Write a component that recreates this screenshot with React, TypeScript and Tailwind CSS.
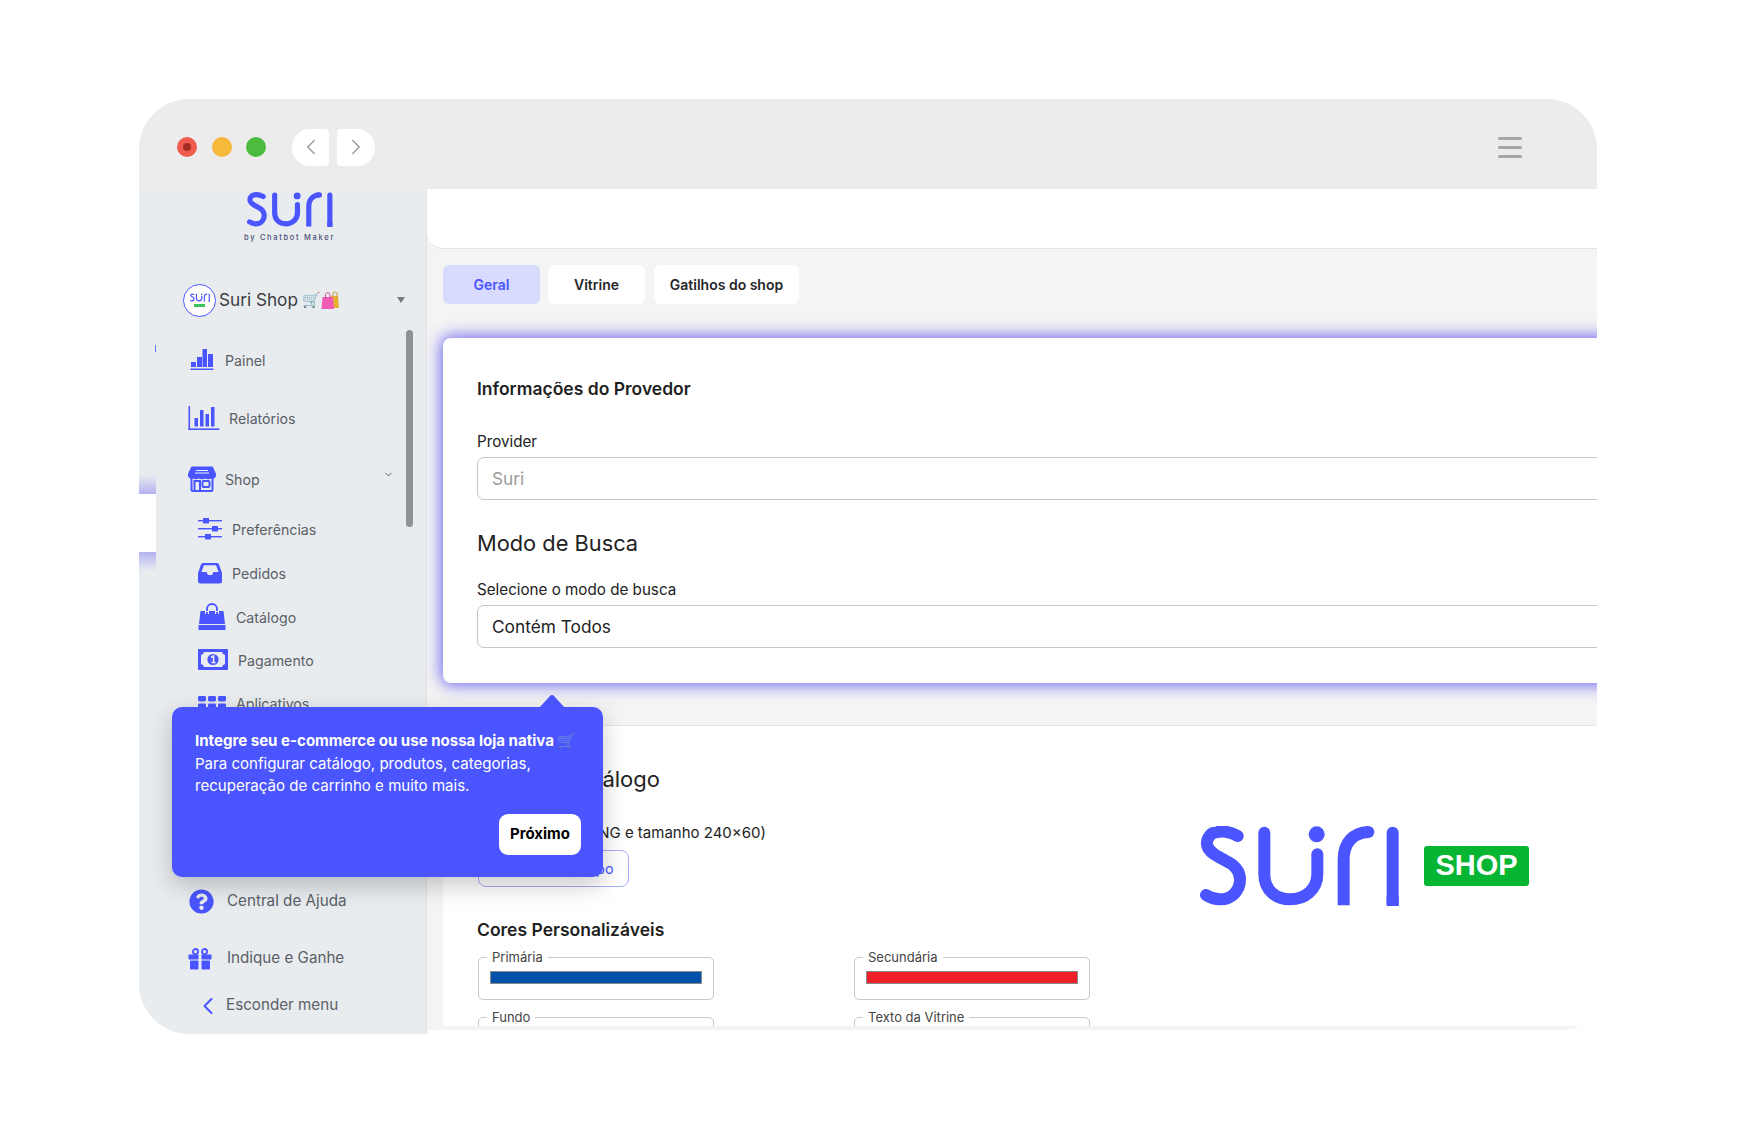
import React from "react";
import { ChevronLeft, ChevronRight, ChevronDown } from "lucide-react";
import { FaQuestionCircle } from "react-icons/fa";

const BLUE = "#4a55ff";

function SuriLogo({ className }: { className?: string }) {
  return (
    <svg viewBox="150 135 600 240" className={className} fill="none" stroke={BLUE} strokeWidth={36} strokeLinecap="round">
      <path d="M263 165 C240 152 215 150 200 153 C175 157 168 180 172 195 C178 215 200 225 225 238 C255 252 270 270 270 295 C270 330 245 355 210 355 C195 355 180 350 168 342" />
      <path d="M343 155 V280 C343 330 380 355 420 355 C465 355 502 325 502 280 V220" />
      <circle cx={500} cy={160} r={24} fill={BLUE} stroke="none" />
      <path d="M581 373 V235 C581 185 610 155 655 153" strokeLinecap="butt" />
      <path d="M655 153 h0" />
      <path d="M728 155 V373" />
      <rect x={710} y={345} width={36} height={28} fill={BLUE} stroke="none" />
    </svg>
  );
}

const PainelIcon = () => (
  <svg width="24" height="22" viewBox="0 0 24 22" fill={BLUE}>
    <rect x="1" y="13" width="5" height="5" />
    <rect x="7" y="8" width="5" height="10" />
    <rect x="12.5" y="0" width="4.5" height="18" />
    <rect x="18" y="5" width="5" height="13" />
    <rect x="0.5" y="19.5" width="23" height="1.5" />
  </svg>
);
const RelatoriosIcon = () => (
  <svg width="32" height="24" viewBox="0 0 32 24" fill={BLUE}>
    <rect x="0.5" y="0" width="1.6" height="24" />
    <rect x="0.5" y="22.4" width="31" height="1.6" />
    <rect x="6.5" y="12" width="3.5" height="8.5" />
    <rect x="12" y="4" width="3.5" height="16.5" />
    <rect x="17.5" y="8" width="3.5" height="12.5" />
    <rect x="23" y="1" width="3.5" height="19.5" />
  </svg>
);
const StoreIcon = () => (
  <svg width="28" height="26" viewBox="0 0 28 26" fill="none" stroke={BLUE} strokeWidth="2">
    <path d="M4 1.5 H24 L27 8 V9.5 C27 11.5 24.5 12.5 23 11 C21.5 12.8 19 12.8 17.5 11 C16 12.8 12.5 12.8 10.5 11 C9 12.8 6.5 12.8 5 11 C3.5 12.5 1 11.5 1 9.5 V8 Z" fill={BLUE} />
    <path d="M3.5 12 V24 A1 1 0 0 0 4.5 25 H23.5 A1 1 0 0 0 24.5 24 V12" />
    <rect x="6.5" y="15" width="5.5" height="10" />
    <rect x="14.5" y="15" width="7" height="6" rx="1" />
    <path d="M8 4.5 H20 M7 7 H21" stroke="#e8ecef" strokeWidth="1.2" />
  </svg>
);
const SlidersIcon = () => (
  <svg width="24" height="22" viewBox="0 0 24 22" fill={BLUE}>
    <rect x="0" y="2" width="24" height="1.4" />
    <rect x="0" y="10" width="24" height="1.4" />
    <rect x="0" y="18" width="24" height="1.4" />
    <rect x="5" y="0" width="6" height="5.4" />
    <rect x="14" y="8" width="6" height="5.4" />
    <rect x="7" y="16" width="6" height="5.4" />
  </svg>
);
const TrayIcon = () => (
  <svg width="24" height="22" viewBox="0 0 24 22">
    <path d="M5 1 H19 A2 2 0 0 1 21 2.5 L24 11 V19 A2.5 2.5 0 0 1 21.5 21.5 H2.5 A2.5 2.5 0 0 1 0 19 V11 L3 2.5 A2 2 0 0 1 5 1 Z" fill={BLUE} />
    <path d="M6 3.2 H18 L20.6 10 H15.5 L14 13 H10 L8.5 10 H3.4 Z" fill="#e8ecef" />
  </svg>
);
const BagIcon = () => (
  <svg width="28" height="27" viewBox="0 0 28 27" fill={BLUE}>
    <path d="M2.5 8 H25.5 L27 21 H1 Z" />
    <rect x="0.5" y="22" width="27" height="5" />
    <path d="M9 11 V6 A5 5 0 0 1 19 6 V11" fill="none" stroke={BLUE} strokeWidth="1.8" />
    <path d="M9 8 V11 M19 8 V11" stroke="#e8ecef" strokeWidth="4" />
    <path d="M9 9 V12 M19 9 V12" stroke={BLUE} strokeWidth="1.8" />
  </svg>
);
const MoneyIcon = () => (
  <svg width="30" height="21" viewBox="0 0 30 21" fill={BLUE}>
    <rect x="0" y="0" width="30" height="21" rx="0.8" />
    <path d="M6 3 H24 A4 4 0 0 0 27 6 V15 A4 4 0 0 0 24 18 H6 A4 4 0 0 0 3 15 V6 A4 4 0 0 0 6 3 Z" fill="#e8ecef" />
    <circle cx="15" cy="10.5" r="5.6" />
    <path d="M13 8.5 L15.6 6.8 V13.2 M13.4 13.6 H17.6" fill="none" stroke="#e8ecef" strokeWidth="1.5" />
  </svg>
);
const GridIcon = () => (
  <svg width="28" height="13" viewBox="0 0 28 13" fill={BLUE}>
    {[0, 10, 20].map((x) =>
      [0, 7.5].map((y) => <rect key={`${x}-${y}`} x={x} y={y} width="8" height="5.5" rx="1.4" />)
    )}
  </svg>
);
const GiftIcon = () => (
  <svg width="24" height="22" viewBox="0 0 24 22" fill={BLUE}>
    <circle cx="7.5" cy="3.6" r="2.6" fill="none" stroke={BLUE} strokeWidth="1.8" />
    <circle cx="16.5" cy="3.6" r="2.6" fill="none" stroke={BLUE} strokeWidth="1.8" />
    <rect x="0.5" y="6.5" width="10" height="5" rx="0.8" />
    <rect x="13.5" y="6.5" width="10" height="5" rx="0.8" />
    <rect x="2" y="12.5" width="8.5" height="9" rx="0.8" />
    <rect x="13.5" y="12.5" width="8.5" height="9" rx="0.8" />
  </svg>
);
const BagsEmoji = () => (
  <svg width="18" height="18" viewBox="0 0 18 18">
    <path d="M10 5 H17 L18 17 H10 Z" fill="#e6b130" />
    <path d="M12 6 V3 A2 2 0 0 1 16 3 V6" fill="none" stroke="#c98f1d" strokeWidth="0.9" />
    <path d="M1.5 6 H12 L13 18 H0.5 Z" fill="#f25bb4" />
    <path d="M4.5 8 V3.5 A2.3 2.3 0 0 1 9 3.5 V8" fill="none" stroke="#d53e98" strokeWidth="0.9" />
  </svg>
);

function Field({ label, color }: { label: string; color?: string }) {
  return (
    <fieldset className="w-[236px] h-[51px] border border-[#c8c8c8] rounded-[5px] px-[11px]">
      <legend className="-ml-[3px] px-[5px] text-[13px] leading-[16px] text-[#444]">{label}</legend>
      {color ? (
        <div className="mt-[6px] h-[13px] border border-[#8a8a8a]" style={{ backgroundColor: color }} />
      ) : null}
    </fieldset>
  );
}

function NavText({ children }: { children: React.ReactNode }) {
  return <span className="text-[14.2px] text-[#5b6067]">{children}</span>;
}

export default function App() {
  return (
    <div className="w-[1746px] h-[1131px] bg-white overflow-hidden pl-[139px] pt-[99px] font-['Inter',sans-serif]">
      <div className="relative w-[1458px]">
        {/* Title bar */}
        <div className="h-[90px] bg-[#ececec] rounded-t-[50px] flex items-center pt-[6px] pl-[38px] pr-[75px]">
          <div className="w-[20px] h-[20px] rounded-full bg-[#ee5c4d] flex items-center justify-center">
            <div className="w-[8px] h-[8px] rounded-full bg-[#a52d24]" />
          </div>
          <div className="w-[20px] h-[20px] rounded-full bg-[#f6b93b] ml-[14.5px]" />
          <div className="w-[20px] h-[20px] rounded-full bg-[#4cbb3f] ml-[14.5px]" />
          <div className="ml-[26px] w-[37px] h-[37px] bg-white rounded-l-[18px] rounded-r-[4px] flex items-center justify-center text-[#9a9a9a]">
            <ChevronLeft size={26} strokeWidth={1.3} />
          </div>
          <div className="ml-[8px] w-[38px] h-[37px] bg-white rounded-r-[18px] rounded-l-[4px] flex items-center justify-center text-[#9a9a9a]">
            <ChevronRight size={26} strokeWidth={1.3} />
          </div>
          <div className="ml-auto w-[24px] flex flex-col gap-[6px]">
            <div className="h-[3px] bg-[#a6a6a6] rounded-full" />
            <div className="h-[3px] bg-[#a6a6a6] rounded-full" />
            <div className="h-[3px] bg-[#a6a6a6] rounded-full" />
          </div>
        </div>

        {/* Body */}
        <div className="flex h-[845px]">
          {/* Sidebar */}
          <aside className="relative w-[288px] h-[845px] shrink-0 bg-[#e8ecef] border-r border-[#dde1e4] rounded-bl-[50px] flex flex-col">
            {/* peeking active item */}
            <div className="absolute left-0 top-[286px] w-[17px] flex flex-col">
              <div className="h-[19px] bg-gradient-to-b from-[#e8ecef] to-[#b5b2f0]" />
              <div className="h-[58px] bg-white" />
              <div className="h-[19px] bg-gradient-to-b from-[#b5b2f0] to-[#e8ecef]" />
            </div>
            <div className="absolute left-[16px] top-[156px] w-[1px] h-[7px] bg-[#6a72f5]" />
            {/* scrollbar */}
            <div className="absolute left-[267px] top-[141px] w-[7px] h-[197px] rounded-full bg-[#8e9292]" />

            <div className="pt-[3px] flex flex-col items-center pl-[14px]">
              <SuriLogo className="w-[86px] h-[35px]" />
              <div className="mt-[5px] text-[7.5px] leading-[12px] tracking-[1.7px] font-medium text-[#4c5078]">by Chatbot Maker</div>
            </div>

            <div className="mt-[39px] h-[34px] flex items-center pl-[44px] pr-[21px]">
              <div className="w-[33px] h-[33px] rounded-full border-[1.5px] border-[#4a55ff] bg-white flex flex-col items-center justify-center">
                <SuriLogo className="w-[20px] h-[9px]" />
                <div className="mt-[2px] w-[11px] h-[3px] bg-[#3cc35c]" />
              </div>
              <span className="ml-[3px] text-[17.2px] text-[#3c3c40]">Suri Shop</span>
              <span className="ml-[4px] text-[15px] leading-none font-['Noto_Color_Emoji',sans-serif]">🛒</span>
              <BagsEmoji />
              <div className="ml-auto w-0 h-0 border-l-[4px] border-r-[4px] border-t-[6px] border-l-transparent border-r-transparent border-t-[#777]" />
            </div>

            <nav className="mt-[14px] flex flex-col">
              <div className="h-[58px] flex items-center pl-[51px]"><PainelIcon /><span className="ml-[11px]"><NavText>Painel</NavText></span></div>
              <div className="h-[58px] flex items-center pl-[49px]"><RelatoriosIcon /><span className="ml-[9px]"><NavText>Relatórios</NavText></span></div>
              <div className="h-[60px] pt-[4px] flex items-center pl-[49px] pr-[32px]">
                <StoreIcon />
                <span className="ml-[9px]"><NavText>Shop</NavText></span>
                <ChevronDown size={11} className="ml-auto mb-[10px] text-[#555]" />
              </div>
              <div className="h-[44px] flex items-center pl-[59px]"><SlidersIcon /><span className="ml-[10px]"><NavText>Preferências</NavText></span></div>
              <div className="h-[44px] flex items-center pl-[59px]"><TrayIcon /><span className="ml-[10px]"><NavText>Pedidos</NavText></span></div>
              <div className="h-[43px] flex items-center pl-[59px]"><BagIcon /><span className="ml-[10px]"><NavText>Catálogo</NavText></span></div>
              <div className="h-[43px] flex items-center pl-[59px]"><MoneyIcon /><span className="ml-[10px]"><NavText>Pagamento</NavText></span></div>
              <div className="h-[43px] flex items-center pl-[59px]"><GridIcon /><span className="ml-[10px]"><NavText>Aplicativos</NavText></span></div>
            </nav>

            <div className="mt-auto mb-[10px] flex flex-col text-[15.2px] text-[#5b6067]">
              <div className="h-[57px] flex items-center pl-[50px]"><FaQuestionCircle size={25} color={BLUE} /><span className="ml-[13px]">Central de Ajuda</span></div>
              <div className="h-[57px] flex items-center pl-[49px]"><GiftIcon /><span className="ml-[15px]">Indique e Ganhe</span></div>
              <div className="h-[37px] flex items-center pl-[55px]"><ChevronLeft size={28} strokeWidth={1.8} color={BLUE} /><span className="ml-[4px]">Esconder menu</span></div>
            </div>
          </aside>

          {/* Main */}
          <main className="flex-1 h-[841px] overflow-hidden bg-[#f4f4f4] rounded-br-[32px] flex flex-col">
            <div className="h-[60px] shrink-0 bg-white border-b border-[#e3e3e3] rounded-bl-[16px]" />
            <div className="mt-[16px] pl-[16px] flex gap-[8px] text-[14px] font-semibold">
              <div className="w-[97px] h-[39px] rounded-[6px] bg-[#d8dbfd] text-[#4a55ff] flex items-center justify-center">Geral</div>
              <div className="w-[97px] h-[39px] rounded-[6px] bg-white text-[#27272a] flex items-center justify-center">Vitrine</div>
              <div className="w-[145px] h-[39px] rounded-[6px] bg-white text-[#27272a] flex items-center justify-center ml-[1px]">Gatilhos do shop</div>
            </div>

            <div className="mt-[34px] ml-[16px] w-[1300px] h-[345px] shrink-0 bg-white rounded-l-[8px] shadow-[0_0_16px_2px_rgba(88,78,240,0.85)] pl-[34px] pt-[39px]">
              <h2 className="text-[17.5px] leading-[24px] font-semibold text-[#1f1f1f]">Informações do Provedor</h2>
              <div className="mt-[32px] text-[15.2px] leading-[18px] text-[#222]">Provider</div>
              <div className="mt-[6px] h-[43px] border-[1.5px] border-[#c6c6c6] rounded-[7px] pl-[14px] flex items-center text-[17.3px] text-[#9a9a9a]">Suri</div>
              <h2 className="mt-[29px] text-[21.8px] leading-[28px] text-[#222]">Modo de Busca</h2>
              <div className="mt-[24px] text-[15.2px] leading-[18px] text-[#222]">Selecione o modo de busca</div>
              <div className="mt-[6px] h-[43px] border border-[#c6c6c6] rounded-[7px] pl-[14px] flex items-center text-[17.3px] text-[#222]">Contém Todos</div>
            </div>

            <section className="mt-[42px] mb-[4px] ml-[16px] flex-1 overflow-hidden bg-white border-t border-[#e5e5e5] flex">
              <div className="w-[757px] pl-[34px] pt-[39px] shrink-0">
                <h2 className="w-[183px] whitespace-nowrap flex justify-end text-[22px] leading-[28px] text-[#222]">Logo do Catálogo</h2>
                <div className="mt-[31px] w-[289px] whitespace-nowrap flex justify-end text-[15px] leading-[18px] text-[#222]">Logotipo (formato PNG e tamanho 240×60)</div>
                <div className="mt-[8px] ml-[1px] w-[151px] h-[37px] border border-[#a9aefc] rounded-[8px] flex items-center justify-center text-[14.5px] text-[#4a55ff]">Carregar logotipo</div>
                <h3 className="mt-[31px] text-[17.5px] leading-[24px] font-semibold text-[#1f1f1f]">Cores Personalizáveis</h3>
                <div className="mt-[7px] ml-[1px] grid grid-cols-[236px_236px] gap-x-[140px] gap-y-[9px]">
                  <Field label="Primária" color="#0152a8" />
                  <Field label="Secundária" color="#f0202a" />
                  <Field label="Fundo" />
                  <Field label="Texto da Vitrine" />
                </div>
              </div>
              <div className="pt-[100px] flex items-start">
                <SuriLogo className="w-[200px] h-[80px]" />
                <div className="ml-[24px] mt-[20px] w-[105px] h-[40px] bg-[#06b633] rounded-[3px] flex items-center justify-center text-[29px] font-bold text-white font-['Liberation_Sans',sans-serif]">SHOP</div>
              </div>
            </section>
          </main>
        </div>

        {/* Tooltip */}
        <div className="absolute left-[33px] top-[608px] w-[431px] h-[170px] bg-[#4a55ff] rounded-[10px] shadow-[0_8px_24px_rgba(0,0,0,0.22)] pl-[23px] pr-[22px] pt-[23px] text-white text-[15.05px] leading-[22.7px]">
          <svg className="absolute left-[367px] -top-[13px]" width="26" height="14" viewBox="0 0 26 14" fill={BLUE}>
            <path d="M0 14 L11 2 Q13 0 15 2 L26 14 Z" />
          </svg>
          <div className="font-bold whitespace-nowrap">
            Integre seu e-commerce ou use nossa loja nativa <span className="font-['Noto_Color_Emoji',sans-serif] opacity-60">🛒</span>
          </div>
          <div>Para configurar catálogo, produtos, categorias,</div>
          <div>recuperação de carrinho e muito mais.</div>
          <div className="absolute right-[22px] bottom-[22px] w-[82px] h-[41px] rounded-[9px] bg-white text-black text-[15px] font-bold flex items-center justify-center">Próximo</div>
        </div>
      </div>
    </div>
  );
}
